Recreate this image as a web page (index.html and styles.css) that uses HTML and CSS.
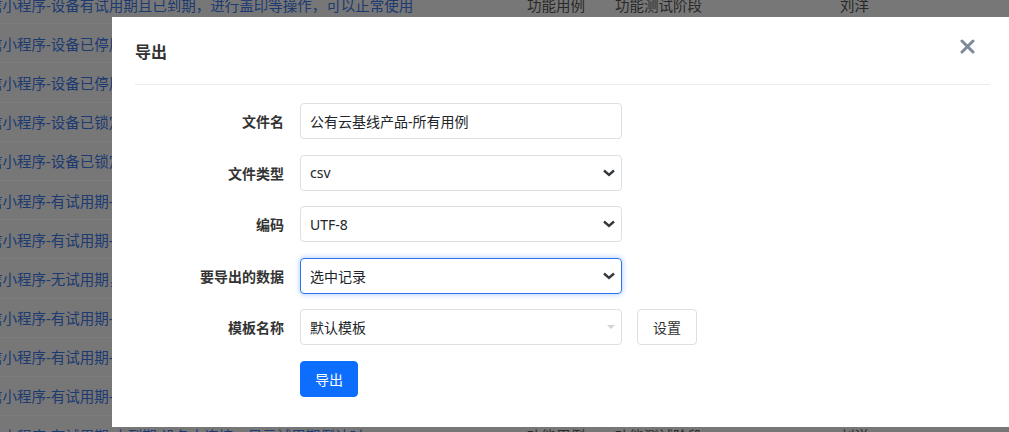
FILE: index.html
```html
<!DOCTYPE html>
<html lang="zh-CN">
<head>
  <meta charset="UTF-8" />
  <meta name="viewport" content="width=device-width, initial-scale=1.0" />
  <title>用例列表 - 导出</title>
  <link rel="stylesheet" href="styles.css">
</head>
<body>

  <!-- 背景里的用例列表 -->
  <div class="case-list">
    <div class="case-row">
      <span class="case-name">信小程序-设备有试用期且已到期，进行盖印等操作，可以正常使用</span>
      <span>功能用例</span><span>功能测试阶段</span><span>刘洋</span>
    </div>
    <div class="case-row">
      <span class="case-name">信小程序-设备已停用，无法进行盖印操作</span>
      <span>功能用例</span><span>功能测试阶段</span><span>刘洋</span>
    </div>
    <div class="case-row">
      <span class="case-name">信小程序-设备已停用，提示联系管理员</span>
      <span>功能用例</span><span>功能测试阶段</span><span>刘洋</span>
    </div>
    <div class="case-row">
      <span class="case-name">信小程序-设备已锁定，无法进行盖印操作</span>
      <span>功能用例</span><span>功能测试阶段</span><span>刘洋</span>
    </div>
    <div class="case-row">
      <span class="case-name">信小程序-设备已锁定，提示解锁</span>
      <span>功能用例</span><span>功能测试阶段</span><span>刘洋</span>
    </div>
    <div class="case-row">
      <span class="case-name">信小程序-有试用期-未到期，可以正常使用</span>
      <span>功能用例</span><span>功能测试阶段</span><span>刘洋</span>
    </div>
    <div class="case-row">
      <span class="case-name">信小程序-有试用期-已到期，提示续费</span>
      <span>功能用例</span><span>功能测试阶段</span><span>刘洋</span>
    </div>
    <div class="case-row">
      <span class="case-name">信小程序-无试用期，可以正常使用</span>
      <span>功能用例</span><span>功能测试阶段</span><span>刘洋</span>
    </div>
    <div class="case-row">
      <span class="case-name">信小程序-有试用期-未到期，设备已连接</span>
      <span>功能用例</span><span>功能测试阶段</span><span>刘洋</span>
    </div>
    <div class="case-row">
      <span class="case-name">信小程序-有试用期-未到期，设备已停用</span>
      <span>功能用例</span><span>功能测试阶段</span><span>刘洋</span>
    </div>
    <div class="case-row">
      <span class="case-name">信小程序-有试用期-未到期，设备已锁定</span>
      <span>功能用例</span><span>功能测试阶段</span><span>刘洋</span>
    </div>
    <div class="case-row">
      <span class="case-name">信小程序-有试用期-未到期,设备未连接，显示试用期倒计时</span>
      <span>功能用例</span><span>功能测试阶段</span><span>刘洋</span>
    </div>
  </div>

  <div class="mask"></div>

  <!-- 导出弹窗 -->
  <div class="modal">
    <div class="modal-head">
      <h2>导出</h2>
      <span class="close">
        <svg width="15" height="15" viewBox="0 0 15 15">
          <path d="M2 2 L13 13 M13 2 L2 13" stroke="#7d8a99" stroke-width="3" stroke-linecap="round" />
        </svg>
      </span>
    </div>

    <div class="modal-body">
      <div class="form-row">
        <label>文件名</label>
        <div class="control">公有云基线产品-所有用例</div>
      </div>

      <div class="form-row">
        <label>文件类型</label>
        <div class="control select">
          <span>csv</span>
          <svg width="12" height="8" viewBox="0 0 12 8"><path d="M1 1.5 L6 6 L11 1.5" fill="none" stroke="#343a40" stroke-width="2.4" /></svg>
        </div>
      </div>

      <div class="form-row">
        <label>编码</label>
        <div class="control select">
          <span>UTF-8</span>
          <svg width="12" height="8" viewBox="0 0 12 8"><path d="M1 1.5 L6 6 L11 1.5" fill="none" stroke="#343a40" stroke-width="2.4" /></svg>
        </div>
      </div>

      <div class="form-row">
        <label>要导出的数据</label>
        <div class="control select focused">
          <span>选中记录</span>
          <svg width="12" height="8" viewBox="0 0 12 8"><path d="M1 1.5 L6 6 L11 1.5" fill="none" stroke="#343a40" stroke-width="2.4" /></svg>
        </div>
      </div>

      <div class="form-row">
        <label>模板名称</label>
        <div class="control select">
          <span>默认模板</span>
          <svg width="8" height="4" viewBox="0 0 8 4"><path d="M0 0 L8 0 L4 4 Z" fill="#d0d3d8" /></svg>
        </div>
        <button class="btn">设置</button>
      </div>

      <div class="form-row">
        <label></label>
        <button class="btn btn-primary">导出</button>
      </div>
    </div>
  </div>

</body>
</html>
```

FILE: styles.css
```css
body {
  margin: 0;
  overflow: hidden;
  font-family: "Noto Sans", "Noto Sans CJK SC", sans-serif;
  color: #212529;
  background: #fff;
}

/* 背景列表 */
.case-list {
  margin-top: -15px;
  margin-left: -12px;
  height: calc(100vh + 15px);
  overflow: hidden;
}

.case-row {
  display: grid;
  grid-template-columns: 539px 88px 225px 1fr;
  align-items: center;
  height: 39.2px;
  box-sizing: border-box;
  border-bottom: 1px solid #ffffff;
  background: #f3f3f3;
  font-size: 14.5px;
  color: #555;
  white-space: nowrap;
}

.case-name {
  color: #3b76e6;
  overflow: hidden;
}

.mask {
  position: fixed;
  top: 0; left: 0;
  width: 100%; height: 100%;
  background: rgba(0, 0, 0, 0.51);
}

/* 弹窗 */
.modal {
  position: absolute;
  top: 17px;
  left: 112px;
  width: 901px;
  background: #fff;
  padding: 0 23px 30px;
  box-sizing: border-box;
}

.modal-head {
  display: flex;
  align-items: center;
  justify-content: space-between;
  height: 68px;
  box-sizing: border-box;
  border-bottom: 1px solid #e9ecef;
}

.modal-head h2 {
  margin: 0;
  font-size: 16px;
  font-weight: bold;
  color: #333;
}

.close {
  display: flex;
  margin-right: 15px;
  margin-top: -8px;
}

.modal-body {
  display: flex;
  flex-direction: column;
  gap: 15.6px;
  padding-top: 18px;
}

.form-row {
  display: flex;
  align-items: center;
  gap: 16px;
}

.form-row label {
  width: 149px;
  text-align: right;
  font-size: 14px;
  font-weight: bold;
  color: #333;
}

.control {
  display: flex;
  align-items: center;
  justify-content: space-between;
  width: 322px;
  height: 36px;
  box-sizing: border-box;
  padding: 0 6px 0 9px;
  border: 1px solid #dcdfe3;
  border-radius: 4px;
  font-size: 14px;
  color: #212529;
}

.control.focused {
  border-color: #2a73ea;
  box-shadow: 0 0 5px 1px rgba(13, 110, 253, 0.28);
}

.btn {
  height: 36px;
  padding: 0 15px;
  border: 1px solid #dcdfe3;
  border-radius: 4px;
  background: #fff;
  font-family: inherit;
  font-size: 14px;
  color: #333;
  margin-left: -1px;
}

.btn-primary {
  background: #0d6efd;
  border-color: #0d6efd;
  color: #fff;
  padding: 0 14px;
  margin-left: 0;
}
```
